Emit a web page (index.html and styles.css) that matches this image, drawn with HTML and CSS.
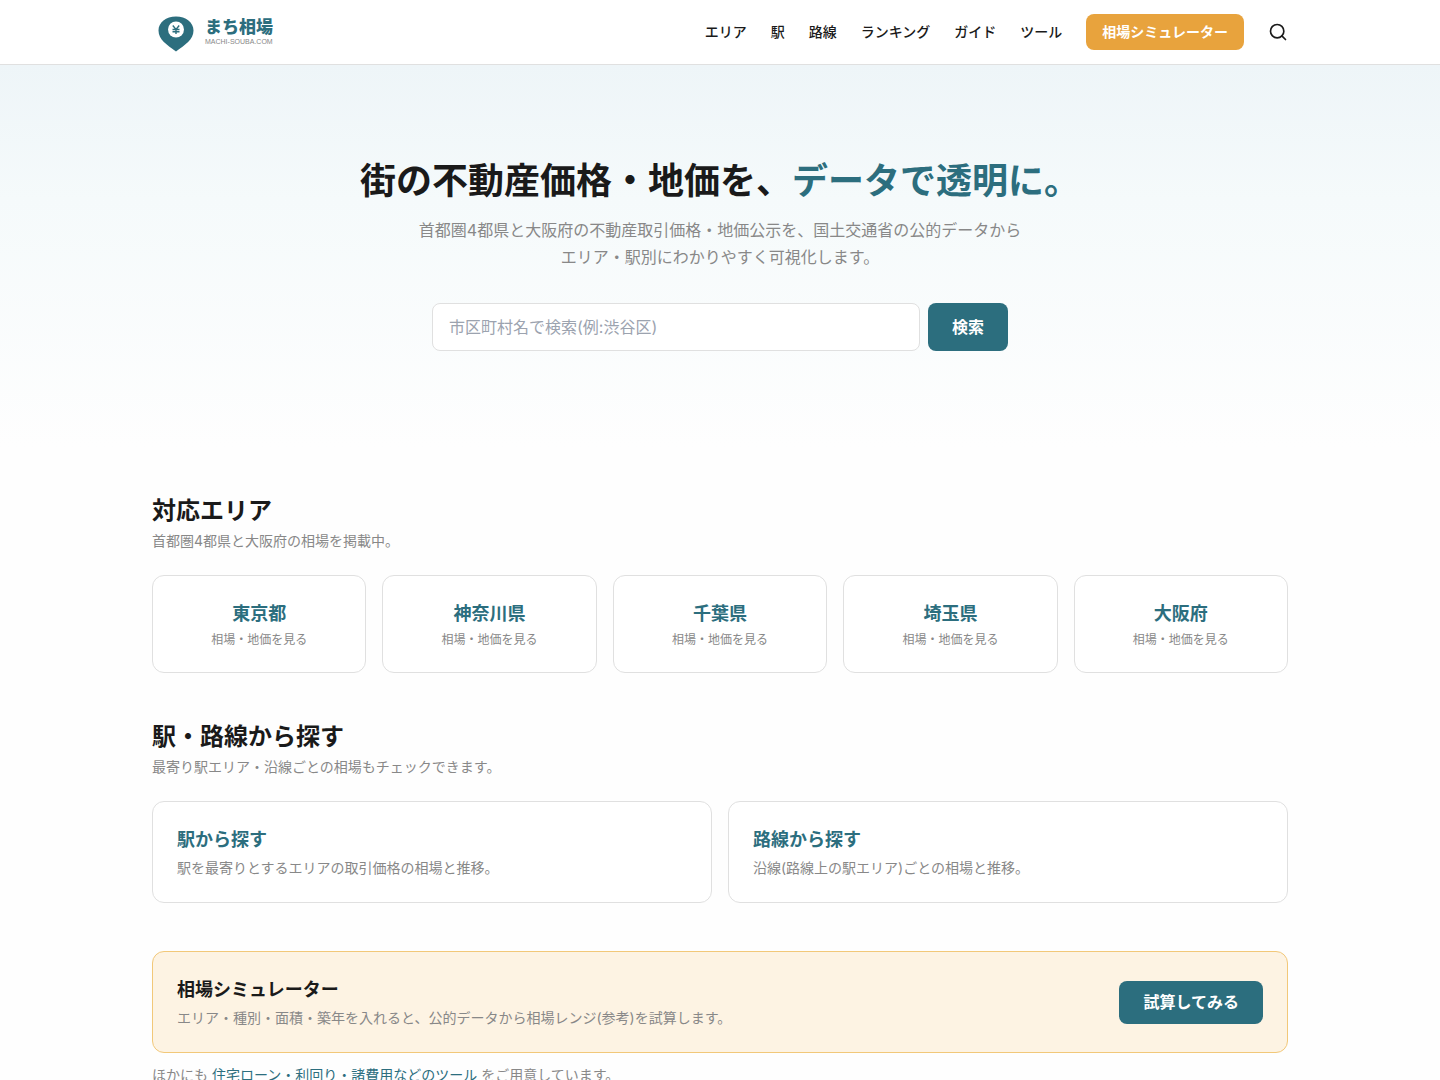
FILE: index.html
```
<!DOCTYPE html>
<html lang="ja">
<head>
    <meta charset="UTF-8">
    <meta name="viewport" content="width=device-width, initial-scale=1.0">
    <title>まち相場</title>
    <link rel="stylesheet" href="styles.css">
</head>
<body>
    <header class="site-header">
        <div class="container header-inner">
            <a href="#" class="logo">
                <svg class="logo-pin" width="36" height="36" viewBox="0 0 36 36" aria-hidden="true">
                    <path d="M18 .5C8 .5 .5 6.500 .5 14.500C.5 23.500 9 29 18 35.500C27 29 35.500 23.500 35.500 14.500C35.500 6.500 28 .5 18 .5Z" fill="#2c6e7e"/>
                    <circle cx="18" cy="13.500" r="8" fill="#fff"/>
                    <path d="M14.800 9.500L18 13.500L21.200 9.500M18 13.500V18M14.500 13.500H21.500M14.500 15.800H21.500" fill="none" stroke="#2c6e7e" stroke-width="1.400"/>
                </svg>
                <span class="logo-text">
                    <span class="logo-name">まち相場</span>
                    <span class="logo-domain">MACHI-SOUBA.COM</span>
                </span>
            </a>
            <nav class="nav">
                <a href="#">エリア</a>
                <a href="#">駅</a>
                <a href="#">路線</a>
                <a href="#">ランキング</a>
                <a href="#">ガイド</a>
                <a href="#">ツール</a>
                <a href="#" class="nav-cta">相場シミュレーター</a>
                <button type="button" class="nav-search" aria-label="検索">
                    <svg width="20" height="20" viewBox="0 0 24 24" fill="none" stroke="currentColor" stroke-width="2" stroke-linecap="round" stroke-linejoin="round" aria-hidden="true">
                        <circle cx="11" cy="11" r="8"/>
                        <path d="M21 21l-4.350-4.350"/>
                    </svg>
                </button>
            </nav>
        </div>
    </header>

    <main>
        <section class="hero">
            <h1>街の不動産価格・地価を、<span class="accent">データで透明に。</span></h1>
            <p class="hero-lead">首都圏4都県と大阪府の不動産取引価格・地価公示を、国土交通省の公的データから<br>エリア・駅別にわかりやすく可視化します。</p>
            <form class="search-form">
                <input type="text" placeholder="市区町村名で検索(例:渋谷区)" aria-label="市区町村名で検索">
                <button type="submit">検索</button>
            </form>
        </section>

        <div class="container content">
            <section>
                <h2>対応エリア</h2>
                <p class="section-desc">首都圏4都県と大阪府の相場を掲載中。</p>
                <div class="area-grid">
                    <a href="#" class="card">
                        <h3>東京都</h3>
                        <p>相場・地価を見る</p>
                    </a>
                    <a href="#" class="card">
                        <h3>神奈川県</h3>
                        <p>相場・地価を見る</p>
                    </a>
                    <a href="#" class="card">
                        <h3>千葉県</h3>
                        <p>相場・地価を見る</p>
                    </a>
                    <a href="#" class="card">
                        <h3>埼玉県</h3>
                        <p>相場・地価を見る</p>
                    </a>
                    <a href="#" class="card">
                        <h3>大阪府</h3>
                        <p>相場・地価を見る</p>
                    </a>
                </div>
            </section>

            <section>
                <h2>駅・路線から探す</h2>
                <p class="section-desc">最寄り駅エリア・沿線ごとの相場もチェックできます。</p>
                <div class="station-grid">
                    <a href="#" class="card">
                        <h3>駅から探す</h3>
                        <p>駅を最寄りとするエリアの取引価格の相場と推移。</p>
                    </a>
                    <a href="#" class="card">
                        <h3>路線から探す</h3>
                        <p>沿線(路線上の駅エリア)ごとの相場と推移。</p>
                    </a>
                </div>
            </section>

            <section>
                <div class="simulator">
                    <div>
                        <h3>相場シミュレーター</h3>
                        <p>エリア・種別・面積・築年を入れると、公的データから相場レンジ(参考)を試算します。</p>
                    </div>
                    <a href="#" class="simulator-btn">試算してみる</a>
                </div>
                <p class="tools-note">ほかにも <a href="#">住宅ローン・利回り・諸費用などのツール</a> をご用意しています。</p>
            </section>
        </div>
    </main>
</body>
</html>
```
FILE: styles.css
```
* {
    box-sizing: border-box;
    margin: 0;
    padding: 0;
}
body {
    background-color: #fefefe;
    color: #1a1a1a;
    font-family: 'Inter', 'Noto Sans CJK JP', sans-serif;
    font-size: 16px;
    line-height: 27px;
}
a {
    color: inherit;
    text-decoration: none;
}
button, input {
    font: inherit;
}
.container {
    max-width: 1200px;
    margin: 0 auto;
    padding: 0 32px;
}

/* Header */
.site-header {
    background-color: #fff;
    border-bottom: 1px solid #e0e0e0;
}
.header-inner {
    display: flex;
    justify-content: space-between;
    align-items: center;
    height: 64px;
}
.logo {
    display: flex;
    align-items: center;
    gap: 11px;
    padding: 3px 6px 0;
}
.logo-text {
    display: flex;
    flex-direction: column;
    padding-bottom: 4px;
}
.logo-name {
    color: #2c6e7e;
    font-size: 17px;
    font-weight: 900;
    line-height: 20px;
}
.logo-domain {
    color: #888;
    font-family: 'Liberation Sans', sans-serif;
    font-size: 7px;
    line-height: 10px;
}
.nav {
    display: flex;
    align-items: center;
    gap: 24px;
    font-size: 14px;
    font-weight: 500;
    line-height: 20px;
}
.nav-cta {
    padding: 8px 16px;
    border-radius: 8px;
    background-color: #e8a33d;
    color: #fff;
    font-weight: 700;
}
.nav-search {
    display: flex;
    border: none;
    background: none;
    color: inherit;
    cursor: pointer;
}

/* Hero */
.hero {
    padding: 96px 32px;
    background: linear-gradient(to bottom, #eef5f8, #f5fafb 35%, #fefefe);
    text-align: center;
}
h1 {
    margin-bottom: 16px;
    font-size: 36px;
    font-weight: 700;
    line-height: 40px;
}
.accent {
    color: #2c6e7e;
}
.hero-lead {
    color: #888;
}
.search-form {
    display: flex;
    gap: 8px;
    max-width: 576px;
    margin: 32px auto 0;
}
.search-form input {
    flex: 1;
    min-width: 0;
    height: 48px;
    padding: 0 16px;
    border: 1px solid #e0e0e0;
    border-radius: 8px;
    background-color: #fff;
    color: #1a1a1a;
}
.search-form input::placeholder {
    color: #9ca3af;
}
.search-form button {
    padding: 0 24px;
    border: none;
    border-radius: 8px;
    background-color: #2c6e7e;
    color: #fff;
    font-weight: 700;
    cursor: pointer;
}

/* Sections */
.content {
    display: flex;
    flex-direction: column;
    gap: 48px;
    padding-top: 48px;
    padding-bottom: 48px;
}
h2 {
    font-size: 24px;
    font-weight: 700;
    line-height: 32px;
}
h3 {
    font-size: 18px;
    font-weight: 700;
    line-height: 28px;
}
.section-desc {
    margin: 4px 0 24px;
    color: #888;
    font-size: 14px;
    line-height: 20px;
}
.area-grid {
    display: grid;
    grid-template-columns: repeat(5, 1fr);
    gap: 16px;
    text-align: center;
}
.station-grid {
    display: grid;
    grid-template-columns: repeat(2, 1fr);
    gap: 16px;
}
.card {
    padding: 24px;
    border: 1px solid #e0e0e0;
    border-radius: 12px;
    background-color: #fff;
}
.card h3 {
    color: #2c6e7e;
}
.card p, .simulator p {
    margin-top: 4px;
    color: #888;
    font-size: 14px;
    line-height: 20px;
}
.area-grid .card p {
    font-size: 12px;
    line-height: 16px;
}

/* Simulator banner */
.simulator {
    display: flex;
    justify-content: space-between;
    align-items: center;
    gap: 16px;
    padding: 24px;
    border: 1px solid #f2c879;
    border-radius: 12px;
    background-color: #fdf3e3;
}
.simulator-btn {
    flex-shrink: 0;
    padding: 8px 24px;
    border-radius: 8px;
    background-color: #2c6e7e;
    color: #fff;
    font-weight: 700;
}
.tools-note {
    margin-top: 12px;
    color: #888;
    font-size: 14px;
    line-height: 20px;
}
.tools-note a {
    color: #2c6e7e;
}

@media (max-width: 900px) {
    .area-grid, .station-grid {
        grid-template-columns: 1fr;
    }
    .nav a:not(.nav-cta) {
        display: none;
    }
    .simulator {
        flex-direction: column;
        align-items: flex-start;
    }
}
```
